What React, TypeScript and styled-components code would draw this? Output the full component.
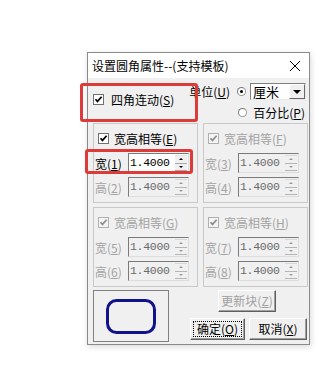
import React from 'react';
import styled, { createGlobalStyle } from 'styled-components';

const GlobalStyle = createGlobalStyle`
  html, body {
    margin: 0;
    padding: 0;
    background: #fff;
  }
  body {
    font-family: "Noto Sans CJK SC", "Liberation Sans", sans-serif;
    font-size: 12px;
    color: #000;
  }
`;

const Page = styled.div`
  padding: 52px 0 0 87px;
  height: 368px;
  box-sizing: border-box;
`;

const Dialog = styled.div`
  position: relative;
  width: 223px;
  height: 293px;
  box-sizing: border-box;
  border: 1px solid #8a8a8a;
  background: #f0f0f0;
  box-shadow: 1px 2px 6px rgba(0, 0, 0, 0.15);
  display: flex;
  flex-direction: column;
`;

const TitleBar = styled.div`
  height: 25px;
  flex: none;
  background: #fff;
  display: flex;
  align-items: center;
  justify-content: space-between;
  padding: 0 8px 0 4px;
  font-size: 12px;
  line-height: 1;
`;

const Body = styled.div`
  flex: 1;
  padding: 0 1px 1px 5px;
  display: flex;
  flex-direction: column;
`;

const TopSection = styled.div`
  height: 45px;
  display: flex;
  justify-content: space-between;
`;

const LinkRow = styled.div`
  display: flex;
  align-items: center;
  gap: 7px;
  height: 14px;
  margin-top: 14px;
`;

const UnitColumn = styled.div`
  display: flex;
  flex-direction: column;
  align-items: flex-end;
  padding-top: 5px;
  gap: 4px;
`;

const UnitRow = styled.div<{ $right: number }>`
  display: flex;
  align-items: center;
  height: 17px;
  margin-right: ${(p) => p.$right}px;
`;

const Radio = styled.span<{ $checked?: boolean }>`
  width: 9px;
  height: 9px;
  border-radius: 50%;
  border: 1px solid #9a9a9a;
  border-top-color: #7a7a7a;
  border-left-color: #7a7a7a;
  background: #fff;
  box-sizing: border-box;
  display: inline-flex;
  align-items: center;
  justify-content: center;
  margin: 0 4px 0 7px;
  &::after {
    content: '';
    width: 3px;
    height: 3px;
    border-radius: 50%;
    background: ${(p) => (p.$checked ? '#000' : 'transparent')};
  }
`;

const Select = styled.div`
  width: 56px;
  height: 17px;
  box-sizing: border-box;
  border: 1px solid #808080;
  border-right-color: #e8e8e8;
  border-bottom-color: #e8e8e8;
  background: #fff;
  display: flex;
  align-items: center;
  justify-content: space-between;
  font-size: 13px;
  padding-left: 2px;
`;

const DropButton = styled.span`
  width: 16px;
  height: 15px;
  box-sizing: border-box;
  background: #f0f0f0;
  border: 1px solid #fff;
  border-right-color: #696969;
  border-bottom-color: #696969;
  display: flex;
  align-items: center;
  justify-content: center;
  &::after {
    content: '';
    border-left: 4px solid transparent;
    border-right: 4px solid transparent;
    border-top: 4px solid #000;
  }
`;

const Groups = styled.div`
  display: grid;
  grid-template-columns: 105px 105px;
  grid-auto-rows: 80px;
  column-gap: 5px;
  row-gap: 4px;
`;

const Group = styled.div`
  border: 1px solid #c9c9c9;
  box-sizing: border-box;
  padding: 7px 0 0 1px;
`;

const CheckRow = styled.div<{ $disabled?: boolean }>`
  display: flex;
  align-items: center;
  gap: 5px;
  height: 14px;
  margin-left: 3px;
  color: ${(p) => (p.$disabled ? '#a3a3a3' : '#000')};
`;

const Box = styled.span<{ $disabled?: boolean }>`
  width: 11px;
  height: 11px;
  box-sizing: border-box;
  border: 1px solid ${(p) => (p.$disabled ? '#b0b0b0' : '#707070')};
  background: ${(p) => (p.$disabled ? '#f4f4f4' : '#fff')};
  display: inline-flex;
  flex: none;
`;

const Fields = styled.div`
  display: flex;
  flex-direction: column;
  gap: 4px;
  margin-top: 8px;
`;

const Field = styled.div<{ $disabled?: boolean }>`
  display: flex;
  align-items: center;
  height: 20px;
  color: ${(p) => (p.$disabled ? '#a3a3a3' : '#000')};
`;

const FieldLabel = styled.span`
  width: 33px;
  flex: none;
  white-space: nowrap;
`;

const SpinBox = styled.div<{ $disabled?: boolean }>`
  width: 61px;
  height: 20px;
  box-sizing: border-box;
  display: flex;
  border: 1px solid #7a7a7a;
  border-right-color: #dcdcdc;
  border-bottom-color: #dcdcdc;
  background: ${(p) => (p.$disabled ? '#f0f0f0' : '#fff')};
`;

const Value = styled.span<{ $disabled?: boolean }>`
  flex: 1;
  font-family: "Liberation Mono", "DejaVu Sans Mono", monospace;
  font-size: 11.5px;
  line-height: 18px;
  padding-left: 1px;
  letter-spacing: -0.3px;
  color: ${(p) => (p.$disabled ? '#6a6a6a' : '#000')};
`;

const Spinner = styled.div`
  width: 13px;
  display: flex;
  flex-direction: column;
  padding: 1px 1px 1px 0;
  box-sizing: border-box;
`;

const SpinHalf = styled.span<{ $down?: boolean; $disabled?: boolean }>`
  flex: 1;
  background: #f0f0f0;
  border-bottom: 1px solid ${(p) => (p.$disabled ? '#b5b5b5' : '#a8a8a8')};
  border-top: ${(p) => (p.$down ? 'none' : `1px solid ${p.$disabled ? '#d8d8d8' : '#e4e4e4'}`)};
  display: flex;
  align-items: center;
  justify-content: center;
  &::after {
    content: '';
    border-left: 2px solid transparent;
    border-right: 2px solid transparent;
    ${(p) =>
      p.$down
        ? `border-top: 2px solid ${p.$disabled ? '#9a9a9a' : '#000'};`
        : `border-bottom: 2px solid ${p.$disabled ? '#9a9a9a' : '#000'};`}
  }
`;

const BottomRow = styled.div`
  display: flex;
  margin-top: 3px;
`;

const Preview = styled.div`
  width: 76px;
  height: 52px;
  box-sizing: border-box;
  border: 1px solid #7f7f7f;
  display: flex;
  align-items: center;
  justify-content: center;
`;

const Actions = styled.div`
  flex: 1;
  display: flex;
  flex-direction: column;
  align-items: flex-end;
`;

const Button = styled.button<{ $width: number; $disabled?: boolean }>`
  width: ${(p) => p.$width}px;
  height: 22px;
  box-sizing: border-box;
  padding: 0;
  margin: 0;
  font-family: "Noto Sans CJK SC", "Liberation Sans", sans-serif;
  font-size: 12px;
  line-height: 1;
  white-space: nowrap;
  color: ${(p) => (p.$disabled ? '#a0a0a0' : '#000')};
  background: #f0f0f0;
  border: 1px solid #fff;
  border-right-color: #5f5f5f;
  border-bottom-color: #5f5f5f;
  box-shadow: inset -1px -1px 0 #a0a0a0;
  display: flex;
  align-items: center;
  justify-content: center;
`;

const UpdateButton = styled(Button)`
  margin-right: 32px;
`;

const ButtonRow = styled.div`
  display: flex;
  gap: 4px;
  margin-top: 6px;
  margin-right: 1px;
`;

const Focus = styled.span`
  box-sizing: border-box;
  border: 1px dotted #000;
  width: 49px;
  height: 16px;
  display: flex;
  justify-content: center;
  align-items: center;
  white-space: nowrap;
`;

const Mark = styled.div<{ $left: number; $top: number; $width: number; $height: number }>`
  position: absolute;
  left: ${(p) => p.$left}px;
  top: ${(p) => p.$top}px;
  width: ${(p) => p.$width}px;
  height: ${(p) => p.$height}px;
  box-sizing: border-box;
  border: 3px solid #dd3a3a;
  border-radius: 3px;
  pointer-events: none;
`;

const Check = ({ disabled }: { disabled?: boolean }) => (
  <Box $disabled={disabled}>
    <svg width="9" height="9" viewBox="0 0 9 9">
      <path d="M1.5 4.2 L3.5 6.4 L7.6 1.8" fill="none" stroke={disabled ? '#8e8e8e' : '#000'} strokeWidth="1.7" />
    </svg>
  </Box>
);

const Spin = ({ value, disabled }: { value: string; disabled?: boolean }) => (
  <SpinBox $disabled={disabled}>
    <Value $disabled={disabled}>{value}</Value>
    <Spinner>
      <SpinHalf $disabled={disabled} />
      <SpinHalf $down $disabled={disabled} />
    </Spinner>
  </SpinBox>
);

type Corner = {
  key: string;
  w: string;
  h: string;
  disabled: boolean;
  wActive?: boolean;
};

const corners: Corner[] = [
  { key: 'E', w: '1', h: '2', disabled: false, wActive: true },
  { key: 'F', w: '3', h: '4', disabled: true },
  { key: 'G', w: '5', h: '6', disabled: true },
  { key: 'H', w: '7', h: '8', disabled: true },
];

export default function App() {
  return (
    <Page>
      <GlobalStyle />
      <Dialog>
        <TitleBar>
          <span>设置圆角属性--(支持模板)</span>
          <svg width="12" height="12" viewBox="0 0 12 12">
            <path d="M1 1 L11 11 M11 1 L1 11" stroke="#000" strokeWidth="1" />
          </svg>
        </TitleBar>
        <Body>
          <TopSection>
            <LinkRow>
              <Check />
              <span>
                四角连动(<u>S</u>)
              </span>
            </LinkRow>
            <UnitColumn>
              <UnitRow $right={2}>
                <span>
                  单位(<u>U</u>)
                </span>
                <Radio $checked />
                <Select>
                  <span>厘米</span>
                  <DropButton />
                </Select>
              </UnitRow>
              <UnitRow $right={3}>
                <Radio />
                <span style={{ marginLeft: 2 }}>
                  百分比(<u>P</u>)
                </span>
              </UnitRow>
            </UnitColumn>
          </TopSection>
          <Groups>
            {corners.map((c) => (
              <Group key={c.key}>
                <CheckRow $disabled={c.disabled}>
                  <Check disabled={c.disabled} />
                  <span>
                    宽高相等(<u>{c.key}</u>)
                  </span>
                </CheckRow>
                <Fields>
                  <Field $disabled={!c.wActive}>
                    <FieldLabel>
                      宽(<u>{c.w}</u>)
                    </FieldLabel>
                    <Spin value="1.4000" disabled={!c.wActive} />
                  </Field>
                  <Field $disabled>
                    <FieldLabel>
                      高(<u>{c.h}</u>)
                    </FieldLabel>
                    <Spin value="1.4000" disabled />
                  </Field>
                </Fields>
              </Group>
            ))}
          </Groups>
          <BottomRow>
            <Preview>
              <svg width="50" height="35" viewBox="0 0 50 35">
                <rect x="1.5" y="1.5" width="47" height="32" rx="9" fill="none" stroke="#12128c" strokeWidth="3" />
              </svg>
            </Preview>
            <Actions>
              <UpdateButton $width={58} $disabled>
                更新块(<u>Z</u>)
              </UpdateButton>
              <ButtonRow>
                <Button $width={55}>
                  <Focus>
                    确定(<u>O</u>)
                  </Focus>
                </Button>
                <Button $width={58}>
                  取消(<u>X</u>)
                </Button>
              </ButtonRow>
            </Actions>
          </BottomRow>
        </Body>
        <Mark $left={-8} $top={30} $width={118} $height={39} />
        <Mark $left={-3} $top={96} $width={108} $height={25} />
      </Dialog>
    </Page>
  );
}
